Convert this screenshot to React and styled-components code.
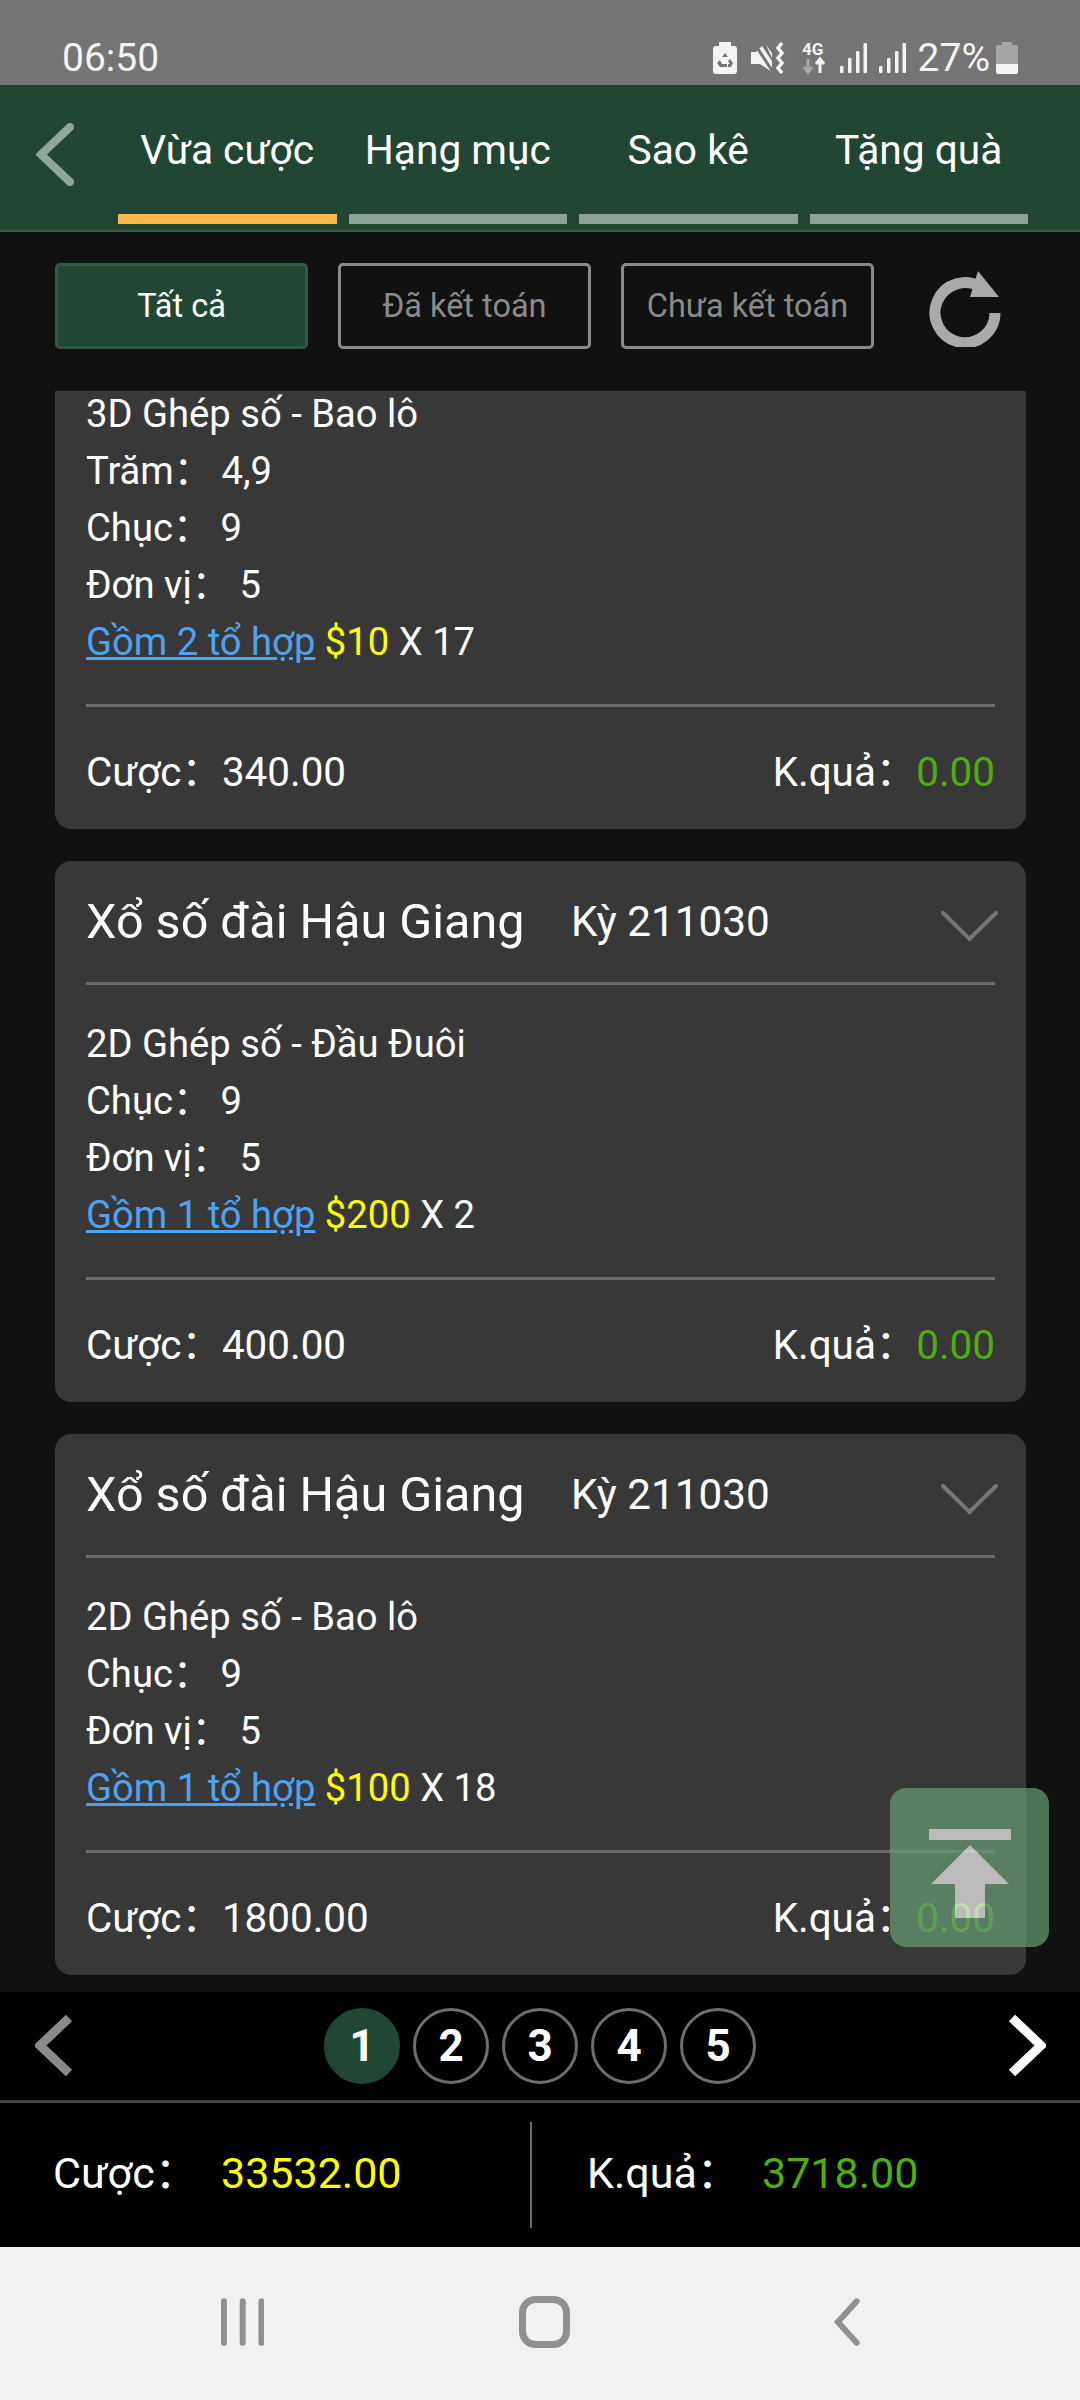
import React from 'react';
import styled, { createGlobalStyle } from 'styled-components';

const GlobalStyle = createGlobalStyle`
  html, body {
    margin: 0;
    padding: 0;
    background: #111111;
  }
  * {
    box-sizing: border-box;
  }
`;

const Page = styled.div`
  position: relative;
  display: flex;
  flex-direction: column;
  width: 1080px;
  height: 2400px;
  overflow: hidden;
  background: #111111;
  color: #ffffff;
  font-family: Roboto, "Noto Sans CJK SC", sans-serif;
`;

const StatusBar = styled.div`
  display: flex;
  align-items: center;
  justify-content: space-between;
  height: 85px;
  padding: 30px 62px 0 62px;
  background: #757575;
  color: #f4f4f4;
  font-size: 39px;
`;

const StatusIcons = styled.div`
  display: flex;
  align-items: center;
`;

const StatusItem = styled.div`
  display: flex;
  align-items: center;
  margin-left: ${(p) => p.$gap}px;
`;

const Header = styled.div`
  display: flex;
  height: 147px;
  padding-left: 36px;
  background: #214734;
  border-bottom: 2px solid #3b5a4b;
`;

const BackButton = styled.div`
  width: 82px;
  padding-top: 38px;
`;

const Tabs = styled.div`
  display: flex;
  gap: 12px;
`;

const Tab = styled.div`
  display: flex;
  flex-direction: column;
  width: 218.5px;
  height: 139px;
`;

const TabLabel = styled.div`
  flex: 1;
  padding-top: 38px;
  text-align: center;
  font-size: 40.7px;
  line-height: 54px;
`;

const TabLine = styled.div`
  height: 10px;
  background: ${(p) => (p.$active ? '#fdb74a' : '#8da397')};
`;

const FilterBar = styled.div`
  display: flex;
  height: 159px;
  flex-shrink: 0;
  padding: 31px 0 0 55px;
  gap: 30px;
`;

const FilterButton = styled.div`
  display: flex;
  align-items: center;
  justify-content: center;
  width: 253px;
  height: 86px;
  border-radius: 5px;
  border: 3px solid ${(p) => (p.$active ? '#2e5a44' : '#8a8a8a')};
  background: ${(p) => (p.$active ? '#214734' : 'transparent')};
  color: ${(p) => (p.$active ? '#ffffff' : '#8a8a8a')};
  font-size: 32.5px;
`;

const RefreshIcon = styled.div`
  margin: 8px 0 0 24px;
`;

const List = styled.div`
  flex: 1;
  display: flex;
  flex-direction: column;
  justify-content: flex-end;
  gap: 32px;
  min-height: 0;
  overflow: hidden;
  padding: 0 54px 17px 55px;
`;

const Card = styled.div`
  flex-shrink: 0;
  padding: 0 31px;
  background: #383838;
  border-radius: 16px;
`;

const CardHead = styled.div`
  display: flex;
  align-items: center;
  height: 124px;
  border-bottom: 3px solid #6a6a6a;
`;

const CardTitle = styled.div`
  width: 485px;
  font-size: 48.5px;
`;

const Period = styled.div`
  flex: 1;
  font-size: 42.3px;
`;

const Expander = styled.div`
  display: flex;
  margin: 10px -3px 0 0;
`;

const CardBody = styled.div`
  padding: 31px 0 33px;
  border-bottom: 3px solid #6a6a6a;
  font-size: 38.2px;
  line-height: 57px;
`;

const Row = styled.div`
  white-space: pre;
`;

const ComboLink = styled.span`
  color: #4da3f2;
  text-decoration: underline;
`;

const Stake = styled.span`
  color: #ffff00;
`;

const CardFoot = styled.div`
  display: flex;
  align-items: center;
  justify-content: space-between;
  height: 122px;
  font-size: 40.4px;
`;

const WinValue = styled.span`
  color: #4caf10;
`;

const Pager = styled.div`
  display: flex;
  align-items: center;
  justify-content: center;
  position: relative;
  height: 111px;
  flex-shrink: 0;
  background: #000000;
  border-bottom: 3px solid #444444;
`;

const PagerArrow = styled.div`
  position: absolute;
  top: 22px;
  ${(p) => (p.$right ? 'right: 34px;' : 'left: 35px;')}
`;

const PageDots = styled.div`
  display: flex;
  gap: 13px;
`;

const PageDot = styled.div`
  display: flex;
  align-items: center;
  justify-content: center;
  width: 76px;
  height: 76px;
  border-radius: 50%;
  border: 3px solid ${(p) => (p.$active ? '#214734' : '#6e6e6e')};
  background: ${(p) => (p.$active ? '#214734' : 'transparent')};
  font-size: 44px;
  font-weight: 700;
`;

const Summary = styled.div`
  display: flex;
  align-items: center;
  height: 144px;
  flex-shrink: 0;
  background: #000000;
  font-size: 43px;
`;

const SummaryCell = styled.div`
  display: flex;
  align-items: baseline;
  width: ${(p) => p.$width}px;
  margin-bottom: 12px;
  padding-left: ${(p) => p.$pad}px;
`;

const SummaryLabel = styled.div`
  width: ${(p) => p.$width}px;
`;

const SummaryDivider = styled.div`
  width: 2px;
  height: 106px;
  background: #6a6a6a;
`;

const NavBar = styled.div`
  display: flex;
  align-items: center;
  height: 153px;
  flex-shrink: 0;
  background: #f1f1f1;
  padding: 0 219px 4px 221px;
`;

const NavHome = styled.div`
  display: flex;
  margin: 0 263px 0 255px;
`;

const ScrollTop = styled.div`
  position: absolute;
  left: 890px;
  top: 1788px;
  display: flex;
  align-items: center;
  justify-content: center;
  width: 159px;
  height: 159px;
  padding-top: 12px;
  border-radius: 16px;
  background: #689a72;
  opacity: 0.72;
`;

function Chevron({ dir = 'left', color, width = 38, height = 63, stroke = 8, cap = 'round' }) {
  const points = {
    left: `${width - 4},4 5,${height / 2} ${width - 4},${height - 4}`,
    right: `4,4 ${width - 5},${height / 2} 4,${height - 4}`,
    down: `2,2 ${width / 2},${height - 3} ${width - 2},2`,
  };
  return (
    <svg width={width} height={height} viewBox={`0 0 ${width} ${height}`}>
      <polyline points={points[dir]} fill="none" stroke={color} strokeWidth={stroke} strokeLinecap={cap} strokeLinejoin="miter" />
    </svg>
  );
}

function BatterySaver() {
  return (
    <svg width="24" height="32" viewBox="0 0 24 32">
      <path d="M6 0h12v4h3a3 3 0 0 1 3 3v22a3 3 0 0 1-3 3H3a3 3 0 0 1-3-3V7a3 3 0 0 1 3-3h3z" fill="#f4f4f4" />
      <path d="M12 11l3 4h-6zM7 18l2 4h5v3H7l-3-4zM17 17l3 4-2 4h-3v-3h2l-2-3z" fill="#757575" />
    </svg>
  );
}

function MuteVibrate() {
  return (
    <svg width="34" height="32" viewBox="0 0 34 32">
      <path d="M0 10h5l6-6 10 15v11L9 22H0z" fill="#f4f4f4" />
      <path d="M15 3l6 8v5z" fill="#f4f4f4" />
      <path d="M3 1l19 29" stroke="#757575" strokeWidth="3" />
      <path d="M31 1l-4 5 4 5-4 5 4 5-4 5 4 5" fill="none" stroke="#f4f4f4" strokeWidth="3.5" />
    </svg>
  );
}

function FourG() {
  return (
    <svg width="24" height="36" viewBox="0 0 24 36">
      <text x="0" y="15" fontSize="17" fontWeight="700" fontFamily="Roboto, sans-serif" fill="#f4f4f4">4G</text>
      <path d="M6 19v12M2 27l4 5 4-5" fill="none" stroke="#a8a8a8" strokeWidth="3" />
      <path d="M18 33V20M14 24l4-5 4 5" fill="none" stroke="#f4f4f4" strokeWidth="3" />
    </svg>
  );
}

function Signal() {
  return (
    <svg width="27" height="30" viewBox="0 0 27 30">
      <rect x="0" y="23" width="3.5" height="7" rx="1" fill="#f4f4f4" />
      <rect x="8" y="15" width="3.5" height="15" rx="1" fill="#f4f4f4" />
      <rect x="16" y="8" width="3.5" height="22" rx="1" fill="#f4f4f4" />
      <rect x="23.5" y="0" width="3.5" height="30" rx="1" fill="#f4f4f4" />
    </svg>
  );
}

function Battery() {
  return (
    <svg width="22" height="32" viewBox="0 0 22 32">
      <path d="M6 0h10v3h4a2 2 0 0 1 2 2v19H0V5a2 2 0 0 1 2-2h4z" fill="#a6a6a6" />
      <path d="M0 22h22v8a2 2 0 0 1-2 2H2a2 2 0 0 1-2-2z" fill="#f4f4f4" />
    </svg>
  );
}

function Refresh() {
  return (
    <svg width="74" height="76" viewBox="0 0 74 76">
      <path d="M54 17A30 30 0 1 0 67 42" fill="none" stroke="#aaaaaa" strokeWidth="11" />
      <path d="M50 0l21 26-29 0z" fill="#aaaaaa" />
    </svg>
  );
}

function UpArrow() {
  return (
    <svg width="84" height="90" viewBox="0 0 84 90">
      <rect x="1" y="0" width="82" height="11" fill="#eeeeee" />
      <path d="M42 16l39 39H57v34H27V55H3z" fill="#eeeeee" />
    </svg>
  );
}

const bets = [
  {
    id: 1,
    cut: true,
    game: '3D Ghép số - Bao lô',
    rows: ['Trăm： 4,9', 'Chục： 9', 'Đơn vị： 5'],
    combo: 'Gồm 2 tổ hợp',
    stake: '$10',
    times: 'X 17',
    amount: '340.00',
  },
  {
    id: 2,
    game: '2D Ghép số - Đầu Đuôi',
    rows: ['Chục： 9', 'Đơn vị： 5'],
    combo: 'Gồm 1 tổ hợp',
    stake: '$200',
    times: 'X 2',
    amount: '400.00',
  },
  {
    id: 3,
    game: '2D Ghép số - Bao lô',
    rows: ['Chục： 9', 'Đơn vị： 5'],
    combo: 'Gồm 1 tổ hợp',
    stake: '$100',
    times: 'X 18',
    amount: '1800.00',
  },
];

function BetCard({ bet }) {
  return (
    <Card>
      {!bet.cut && (
        <CardHead>
          <CardTitle>Xổ số đài Hậu Giang</CardTitle>
          <Period>Kỳ 211030</Period>
          <Expander>
            <Chevron dir="down" color="#777777" width={57} height={31} stroke={4} />
          </Expander>
        </CardHead>
      )}
      <CardBody>
        <Row>{bet.game}</Row>
        {bet.rows.map((row) => <Row key={row}>{row}</Row>)}
        <Row>
          <ComboLink>{bet.combo}</ComboLink> <Stake>{bet.stake}</Stake> {bet.times}
        </Row>
      </CardBody>
      <CardFoot>
        <span>Cược：{bet.amount}</span>
        <span>K.quả：<WinValue>0.00</WinValue></span>
      </CardFoot>
    </Card>
  );
}

export default function App() {
  return (
    <Page>
      <GlobalStyle />
      <StatusBar>
        <span>06:50</span>
        <StatusIcons>
          <BatterySaver />
          <StatusItem $gap={14}><MuteVibrate /></StatusItem>
          <StatusItem $gap={17}><FourG /></StatusItem>
          <StatusItem $gap={14}><Signal /></StatusItem>
          <StatusItem $gap={12}><Signal /></StatusItem>
          <StatusItem $gap={12}>27%</StatusItem>
          <StatusItem $gap={6}><Battery /></StatusItem>
        </StatusIcons>
      </StatusBar>
      <Header>
        <BackButton><Chevron color="#8fa79a" /></BackButton>
        <Tabs>
          {['Vừa cược', 'Hạng mục', 'Sao kê', 'Tặng quà'].map((t, i) => (
            <Tab key={t}>
              <TabLabel>{t}</TabLabel>
              <TabLine $active={i === 0} />
            </Tab>
          ))}
        </Tabs>
      </Header>
      <FilterBar>
        <FilterButton $active>Tất cả</FilterButton>
        <FilterButton>Đã kết toán</FilterButton>
        <FilterButton>Chưa kết toán</FilterButton>
        <RefreshIcon><Refresh /></RefreshIcon>
      </FilterBar>
      <List>
        {bets.map((bet) => <BetCard key={bet.id} bet={bet} />)}
      </List>
      <Pager>
        <PagerArrow><Chevron color="#8a8a8a" stroke={9} cap="butt" /></PagerArrow>
        <PageDots>
          {[1, 2, 3, 4, 5].map((n) => <PageDot key={n} $active={n === 1}>{n}</PageDot>)}
        </PageDots>
        <PagerArrow $right><Chevron dir="right" color="#ffffff" stroke={9} cap="butt" /></PagerArrow>
      </Pager>
      <Summary>
        <SummaryCell $width={530} $pad={53}>
          <SummaryLabel $width={168}>Cược：</SummaryLabel>
          <Stake>33532.00</Stake>
        </SummaryCell>
        <SummaryDivider />
        <SummaryCell $width={548} $pad={55}>
          <SummaryLabel $width={175}>K.quả：</SummaryLabel>
          <WinValue>3718.00</WinValue>
        </SummaryCell>
      </Summary>
      <NavBar>
        <svg width="44" height="48" viewBox="0 0 44 48">
          <path d="M3 3v42M22 3v42M41 3v42" stroke="#909090" strokeWidth="6" strokeLinecap="round" />
        </svg>
        <NavHome>
          <svg width="51" height="52" viewBox="0 0 51 52">
            <rect x="3.5" y="3.5" width="44" height="45" rx="13" fill="none" stroke="#909090" strokeWidth="7" />
          </svg>
        </NavHome>
        <Chevron color="#909090" width={28} height={50} stroke={6} />
      </NavBar>
      <ScrollTop><UpArrow /></ScrollTop>
    </Page>
  );
}
